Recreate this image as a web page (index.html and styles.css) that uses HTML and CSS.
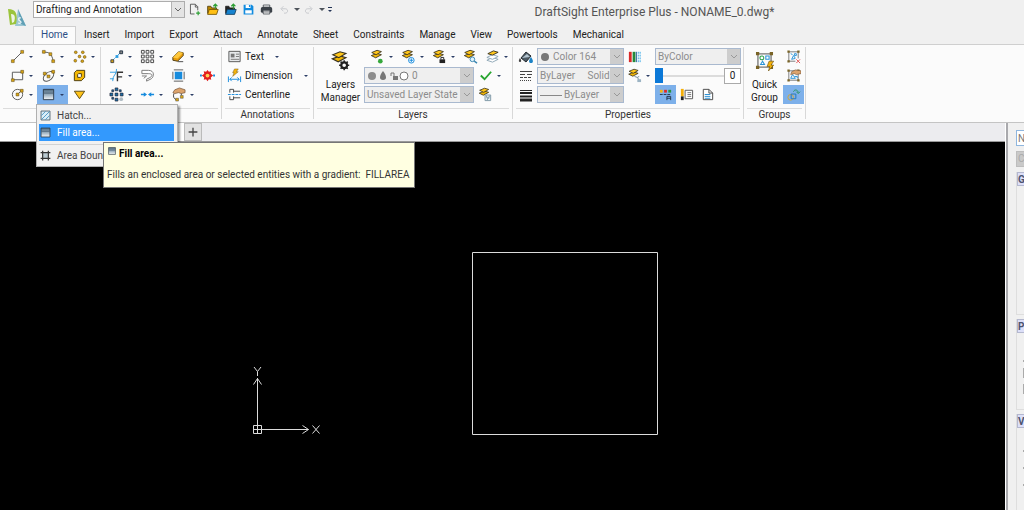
FILE: index.html
```html
<!DOCTYPE html>
<html lang="en">
<head>
<meta charset="utf-8">
<title>DraftSight Enterprise Plus - NONAME_0.dwg*</title>
<link rel="stylesheet" href="styles.css">
</head>
<body>
<svg class="defs" aria-hidden="true">
  <linearGradient id="fade" x1="0" y1="0" x2="0" y2="1"><stop offset="0" stop-color="#4f6a80"/><stop offset=".45" stop-color="#8fa6b7"/><stop offset="1" stop-color="#f4f7f9"/></linearGradient>
  <symbol id="layers" viewBox="0 0 16 16"><path d="M1.500 7.500 8 5l5 1.500-6.500 3.500z" fill="#f2b705" stroke="#3b3420"/><path d="M2 4 8 1.500l5 1.500-6 3.500z" fill="#ffc61a" stroke="#3b3420"/></symbol>
  <symbol id="gear" viewBox="0 0 16 16"><circle cx="8" cy="8" r="4" fill="none" stroke="#222" stroke-width="3"/><path d="M8 1v3M8 12v3M1 8h3M12 8h3M3 3l2 2M11 11l2 2M3 13l2-2M11 5l2-2" stroke="#222" stroke-width="2"/></symbol>
  <symbol id="fill" viewBox="0 0 16 16"><path d="M2.500 2.500h11v11h-11z" fill="url(#fade)" stroke="#2e3b47"/><path d="M3 6.500h10" stroke="#4a6075"/></symbol>
  <symbol id="frame" viewBox="0 0 16 16"><path d="M3 3h10v10H3z" fill="none" stroke="#777"/><path d="M1.500 1.500h2.500v2.500H1.500zM12 1.500h2.500v2.500H12zM1.500 12h2.500v2.500H1.500zM12 12h2.500v2.500H12z" fill="#7a6427"/></symbol>
</svg>
<div class="app">
  <header class="top">
    <svg class="logo" viewBox="0 0 18 19"><path d="M10 1 18 18H7z" fill="#9cc7d4"/><path d="M10 1 18 18l-5-2z" fill="#5f9fb5"/><path d="M0 1c8 0 10 5 8 15l-6 1z" fill="#9bc43c"/><path d="M3 6c5 0 4 5 3 8l-2 1z" fill="#eef3e4"/><path d="M13 10c-3-1-3 2-1 3s1 3-2 2" fill="none" stroke="#eef5f7" stroke-width="1.200"/></svg>
    <div class="top-rows">
      <div class="quick">
        <select class="workspace" aria-label="Workspace"><option>Drafting and Annotation</option></select>
        <button class="qb" aria-label="New"><svg viewBox="0 0 16 16"><path d="M3 1.500h6l3 3V9M8 13.500H3v-12M9 2v3h3" fill="none" stroke="#444"/><path d="M12.500 10v5M10 12.500h5" stroke="#2fa036" stroke-width="1.500"/></svg></button>
        <button class="qb" aria-label="Open"><svg viewBox="0 0 16 16"><path d="M2 13V4h4l1 2h6v2" fill="#b98500" stroke="#4d3c0c"/><path d="m2 14 2-6h11l-2 6z" fill="#ffbf13" stroke="#6b4f05"/><path d="M11.500 7V2M9 4l2.500-2.500L14 4" fill="none" stroke="#2fa036" stroke-width="1.500"/></svg></button>
        <button class="qb" aria-label="Open from server"><svg viewBox="0 0 16 16"><path d="M2 13V4h4l1 2h6v2" fill="#222" stroke="#222"/><path d="m2 14 2-6h11l-2 6z" fill="#1683d0" stroke="#153c5a"/><path d="M11.500 7V2M9 4l2.500-2.500L14 4" fill="none" stroke="#2fa036" stroke-width="1.500"/></svg></button>
        <button class="qb" aria-label="Save"><svg viewBox="0 0 16 16"><path d="M2 2h10l2 2v10H2z" fill="#118bdf"/><path d="M4.500 2h6v4h-6zM4 9h8v4H4z" fill="#fff"/><path d="M8.500 2.500H10V5H8.500z" fill="#118bdf"/></svg></button>
        <button class="qb" aria-label="Print"><svg viewBox="0 0 16 16"><rect x="1" y="5" width="14" height="7" rx="2" fill="#3b4148"/><path d="M4 2.500h8V5H4zM4 9h8v4.500H4z" fill="#fff" stroke="#3b4148"/><path d="M5 11h6" stroke="#3b4148"/></svg></button>
        <button class="qb" aria-label="Undo"><svg viewBox="0 0 16 16"><path d="M4 6h6c5 0 5 7 0 7H8M7 2 3 6l4 4" fill="none" stroke="#c5c8cc" stroke-width="1.500"/></svg></button>
        <button class="tri" aria-label="Undo list"></button>
        <button class="qb" aria-label="Redo"><svg viewBox="0 0 16 16"><path d="M12 6H6c-5 0-5 7 0 7h2M9 2l4 4-4 4" fill="none" stroke="#c5c8cc" stroke-width="1.500"/></svg></button>
        <button class="tri" aria-label="Redo list"></button>
        <button class="tri more" aria-label="Customize"></button>
        <h1>DraftSight Enterprise Plus - NONAME_0.dwg*</h1>
      </div>
      <nav class="tabs">
        <a class="on" href="#home">Home</a><a href="#insert">Insert</a><a href="#import">Import</a><a href="#export">Export</a><a href="#attach">Attach</a><a href="#annotate">Annotate</a><a href="#sheet">Sheet</a><a href="#constraints">Constraints</a><a href="#manage">Manage</a><a href="#view">View</a><a href="#powertools">Powertools</a><a href="#mechanical">Mechanical</a>
      </nav>
    </div>
  </header>

  <section class="ribbon">
    <div class="group draw">
      <div class="tools">
        <button class="tool drop" aria-label="Line"><svg viewBox="0 0 16 16"><path d="m3 13 10-10" stroke="#555"/><path d="M1.500 11.500h3v3h-3zM11.500 1.500h3v3h-3z" fill="#d9a514" stroke="#66501a" stroke-width=".6"/></svg></button>
        <button class="tool drop" aria-label="Arc"><svg viewBox="0 0 16 16"><path d="M3 4c5-2 9 2 10 9" fill="none" stroke="#555"/><g fill="#d9a514" stroke="#66501a" stroke-width=".6"><path d="M1.500 1.500h3v3h-3zM8.500 4h3v3h-3zM11.500 11.500h3v3h-3z"/></g></svg></button>
        <button class="tool drop" aria-label="Point"><svg viewBox="0 0 16 16"><g fill="#d9a514" stroke="#66501a" stroke-width=".6"><circle cx="4" cy="3.500" r="1.500"/><circle cx="11.500" cy="3.500" r="1.500"/><circle cx="8" cy="8" r="1.500"/><circle cx="13.500" cy="8.500" r="1.500"/><circle cx="3.500" cy="12.500" r="1.500"/><circle cx="11" cy="13" r="1.500"/></g></svg></button>
        <button class="tool drop" aria-label="Rectangle"><svg viewBox="0 0 16 16"><path d="M2.500 4.500h11v8h-11z" fill="none" stroke="#555"/><path d="M11.500 2.500h3v3h-3zM1.500 11.500h3v3h-3z" fill="#d9a514" stroke="#66501a" stroke-width=".6"/></svg></button>
        <button class="tool drop" aria-label="Ellipse"><svg viewBox="0 0 16 16"><ellipse cx="8" cy="9" rx="6.500" ry="4" transform="rotate(-40 8 9)" fill="none" stroke="#555"/><g fill="#d9a514" stroke="#66501a" stroke-width=".6"><path d="M6.500 7.500h3v3h-3zM11.500 2.500h3v3h-3zM2.500 4.500h3v3h-3z"/></g></svg></button>
        <button class="tool" aria-label="Region"><svg viewBox="0 0 16 16"><path d="M5 2.500h8.500V10L10 13.500H2.500V5z" fill="#f2b705" stroke="#463a12"/><path d="M7 6h3v3l-1 1H6V7z" fill="#fff" stroke="#463a12"/></svg></button>
        <button class="tool drop" aria-label="Circle"><svg viewBox="0 0 16 16"><circle cx="8" cy="8" r="5.500" fill="none" stroke="#555"/><path d="m8 8 4-4" stroke="#555"/><path d="M6.500 6.500h3v3h-3zM11 2.500h3v3h-3z" fill="#d9a514" stroke="#66501a" stroke-width=".6"/></svg></button>
        <div class="menu-host">
          <button class="tool drop on" aria-label="Hatch and fill"><svg><use href="#fill"/></svg></button>
          <div class="menu">
            <button><svg viewBox="0 0 16 16"><path d="M2.500 2.500h11v11h-11z" fill="#d9edf8" stroke="#405260"/><path d="m3 8 5-5M3 13 13 3M8 13l5-5" stroke="#3a8dbd"/></svg>Hatch...</button>
            <button class="hot"><svg><use href="#fill"/></svg>Fill area...</button>
            <hr>
            <button><svg viewBox="0 0 16 16"><path d="M5 5h6v6H5z" fill="#b8c8d0"/><path d="M4.500 2v12M11.500 2v12M2 4.500h12M2 11.500h12" stroke="#333" stroke-width="1.500"/></svg>Area Boun</button>
            <div class="tip" role="tooltip"><svg><use href="#fill"/></svg><strong>Fill area...</strong><p>Fills an enclosed area or selected entities with a gradient:&nbsp; FILLAREA</p></div>
          </div>
        </div>
        <button class="tool" aria-label="Wipeout"><svg viewBox="0 0 16 16"><path d="M2.500 4.500h11L8 12.500z" fill="#ffc31a" stroke="#594812"/></svg></button>
      </div>
      <h2></h2>
    </div>

    <div class="group modify">
      <div class="tools">
        <button class="tool drop" aria-label="Move"><svg viewBox="0 0 16 16"><path d="m4 12 8-8" stroke="#2b9be0" stroke-dasharray="3 1"/><path d="M2 11.500h3v3H2z" fill="#d9a514" stroke="#444"/><path d="M11.500 2h3v3h-3z" fill="#888" stroke="#234"/><path d="M7 6.500h3v3H7z" fill="#2b9be0"/></svg></button>
        <button class="tool drop" aria-label="Pattern"><svg viewBox="0 0 16 16"><path d="M1.500 1.500h3v3h-3zM6.500 1.500h3v3h-3zM11.500 1.500h3v3h-3zM1.500 6.500h3v3h-3zM6.500 6.500h3v3h-3zM11.500 6.500h3v3h-3zM1.500 11.500h3v3h-3zM6.500 11.500h3v3h-3zM11.500 11.500h3v3h-3z" fill="none" stroke="#444"/></svg></button>
        <button class="tool drop" aria-label="Delete"><svg viewBox="0 0 16 16"><path d="m2 9 6-6 5 1v3l-6 6-5-1z" fill="#e89c08" stroke="#4c3a12"/><path d="m2 9 6-6 5 1-6 6z" fill="#ffc83c"/><path d="M7 13.500h6" stroke="#444"/></svg></button>
        <span></span>
        <button class="tool drop" aria-label="Trim"><svg viewBox="0 0 16 16"><path d="M1 4.500h7M1 11.500h4M8 1c0 7-4 6-4 13" fill="none" stroke="#2b9be0"/><path d="M15 4.500H9V14M9 9.500h5" fill="none" stroke="#333" stroke-width="1.500"/></svg></button>
        <button class="tool" aria-label="Offset"><svg viewBox="0 0 16 16"><path d="M2 2.500h7c7 0 6 7 3 9l-5 2.500v-2l4-2c3-2 2-4-2-4H2zM2 8.500h5L4 11" fill="#fff" stroke="#777"/></svg></button>
        <button class="tool" aria-label="Stretch"><svg viewBox="0 0 16 16"><path d="M4 4h8v8H4z" fill="#168bdd"/><path d="M3 2h10M3 14h10M2 4v8M14 4v8" stroke="#555"/></svg></button>
        <button class="tool" aria-label="Explode"><svg viewBox="0 0 16 16"><path d="M0 8h2M14 8h2" stroke="#168bdd" stroke-width="2"/><path d="m8 2 1.500 2 2.500-.5-.5 2.500L14 8l-2.500 2 .5 2.500-2.500-.5L8 14l-1.500-2-2.500.5.500-2.500L2 8l2.500-2L4 3.500l2.500.5z" fill="#e21e1e"/><circle cx="8" cy="8" r="2" fill="#ffcf55"/></svg></button>
        <button class="tool drop" aria-label="Array"><svg viewBox="0 0 16 16"><g fill="#1b6fa8" stroke="#223" stroke-width=".7"><path d="M6.500 1h3v3h-3zM6.500 6.500h3v3h-3zM1 6.500h3v3H1zM12 6.500h3v3h-3zM6.500 12h3v3h-3zM3 3h2v2H3zM11 3h2v2h-2zM3 11h2v2H3z"/></g><circle cx="13" cy="13" r="2" fill="#aebac2"/></svg></button>
        <button class="tool drop" aria-label="Weld"><svg viewBox="0 0 16 16"><path d="M1 8h5M10 8h5" stroke="#168bdd" stroke-width="1.500"/><path d="m4 5.500 3.500 2.500L4 10.500zM12 5.500 8.500 8l3.500 2.500z" fill="#168bdd"/></svg></button>
        <button class="tool drop" aria-label="Edit polyline"><svg viewBox="0 0 16 16"><path d="m4 3 5-2 6 2v3l-4 1-3-1-4 1-2-1z" fill="#dca36c" stroke="#6b4d32" stroke-width=".7"/><path d="M3 7c-1 4 0 5 3 7M11 7v2" fill="none" stroke="#444"/><path d="M10 9h3v3h-3zM5 12h3v3H5z" fill="#d9a514" stroke="#444" stroke-width=".5"/></svg></button>
      </div>
      <h2></h2>
    </div>

    <div class="group notes">
      <div class="rows">
        <button class="wide"><svg viewBox="0 0 16 16"><path d="M2 2.500h12v11H2z" fill="#e7e9eb" stroke="#555"/><path d="M4 5h4v4H4z" fill="#777"/><path d="M9.500 5.500H13M9.500 8H13M4 11h9" stroke="#777"/></svg>Text<i class="arrow"></i></button>
        <button class="wide"><svg viewBox="0 0 16 16"><path d="M8 1h4l-2 3h2L6 9l1.500-4H6z" fill="#f5b30a" stroke="#74581a" stroke-width=".5"/><path d="M1.500 9v6M14.500 9v6M3 12h10M5 10l-2 2 2 2M11 10l2 2-2 2" fill="none" stroke="#168bdd"/></svg>Dimension<i class="arrow"></i></button>
        <button class="wide"><svg viewBox="0 0 16 16"><path d="M1 8h14" stroke="#168bdd" stroke-dasharray="3 1"/><path d="M3 6V2.500h4V6M7 4.500h7M3 10v3.500h4V10M7 11.500h7" fill="none" stroke="#444"/></svg>Centerline</button>
      </div>
      <h2>Annotations</h2>
    </div>

    <div class="group layer">
      <div class="split">
        <button class="big"><svg viewBox="0 0 20 20"><use href="#layers" width="19" height="18"/><use href="#gear" x="8" y="9" width="11" height="11"/></svg><span>Layers Manager</span></button>
        <div class="rows">
          <div class="row">
            <button class="tool drop" aria-label="Activate layer"><svg viewBox="0 0 16 16"><use href="#layers" width="15" height="15"/><circle cx="11" cy="13" r="2.500" fill="#35a83b"/></svg></button>
            <button class="tool drop" aria-label="New layer"><svg viewBox="0 0 16 16"><use href="#layers" width="15" height="15"/><circle cx="11" cy="12" r="3" fill="#fff" stroke="#168bdd"/><path d="M11 10v4M9 12h4" stroke="#168bdd"/></svg></button>
            <button class="tool drop" aria-label="Lock layer"><svg viewBox="0 0 16 16"><use href="#layers" width="15" height="15"/><path d="M8 11h6v4H8z" fill="#222"/><path d="M9.500 11V9h3v2" fill="none" stroke="#222"/></svg></button>
            <button class="tool" aria-label="Layer preview"><svg viewBox="0 0 16 16"><use href="#layers" width="15" height="15"/><circle cx="10" cy="11" r="2.500" fill="#dff2fc" stroke="#3985b0"/><path d="m12 13 3 2" stroke="#3985b0" stroke-width="1.500"/></svg></button>
            <button class="tool drop" aria-label="Layer tools"><svg viewBox="0 0 16 16"><path d="m2 12 6-3 6 2-6 3z" fill="#fff" stroke="#8ea6b5"/><path d="m2 9 6-3 6 2-6 3z" fill="#fff" stroke="#8ea6b5"/><path d="m3 5 6-3 5 1.500-6 3z" fill="#ffc61a" stroke="#3b3420"/></svg></button>
          </div>
          <div class="row">
            <span class="pick"><select class="combo icons4" aria-label="Active layer"><option>0</option></select><svg class="over" viewBox="0 0 42 12"><circle cx="5" cy="6" r="4" fill="#8c8c8c"/><path d="M16 1c4 5 4 9 0 9s-4-4 0-9z" fill="#777"/><path d="M24 6V3h3v3" fill="none" stroke="#777"/><path d="M26 6h5v4h-5z" fill="#777"/><circle cx="37" cy="6" r="4" fill="#fff" stroke="#777"/></svg></span>
            <button class="tool drop" aria-label="Apply"><svg viewBox="0 0 16 16"><path d="m3 8 4 4 7-8" fill="none" stroke="#27a52f" stroke-width="2"/></svg></button>
          </div>
          <div class="row">
            <span class="pick"><select class="combo" aria-label="Layer state"><option>Unsaved Layer State</option></select></span>
            <button class="tool" aria-label="Layer states manager"><svg viewBox="0 0 16 16"><use href="#layers" width="14" height="14"/><path d="M7.500 8.500h6v6h-6z" fill="#e9f1f5" stroke="#7e98a5"/><path d="M9 9v2h3V9M10 14v-2h2" fill="none" stroke="#7e98a5"/></svg></button>
          </div>
        </div>
      </div>
      <h2>Layers</h2>
    </div>

    <div class="group props">
      <div class="split">
        <div class="rows">
          <div class="row">
            <svg class="mark" viewBox="0 0 16 16"><path d="m3 9 5-6 5 4-5 6z" fill="#4d5a64" stroke="#252b30"/><path d="m4 9 5-4 3 3z" fill="#b3c4cf"/><path d="M13 8c3 4 2 6 0 6s-3-2 0-6z" fill="#1c83c6"/><path d="M2 9c2 3 1 4 0 4s-2-1 0-4z" fill="#444"/></svg>
            <span class="pick"><select class="combo icons1" aria-label="Line color"><option>Color 164</option></select><svg class="over" viewBox="0 0 42 12"><circle cx="5" cy="6" r="4" fill="#777"/></svg></span>
            <button class="tool" aria-label="Colors"><svg viewBox="0 0 16 16"><path d="M2 3h3v11H2z" fill="#d92929"/><path d="M6 3h3v11H6z" fill="#26883a"/><path d="M10 3v11" stroke="#225b94"/><path d="M12 3v11M14 3v11" stroke="#33a6e5" stroke-dasharray="2 1"/></svg></button>
          </div>
          <div class="row">
            <svg class="mark" viewBox="0 0 16 16"><g stroke="#444"><path d="M2 3.500h12"/><path d="M2 6.500h12" stroke-dasharray="5 2"/><path d="M2 9.500h12" stroke-dasharray="3 1"/><path d="M2 12.500h12" stroke-dasharray="1 1"/></g></svg>
            <span class="pick"><select class="combo" aria-label="Line style"><option>ByLayer&nbsp;&nbsp;&nbsp;&nbsp; Solid</option></select></span>
            <button class="tool drop" aria-label="Property painter"><svg viewBox="0 0 16 16"><use href="#layers" width="15" height="14"/><path d="m8 9 3 1 2 3M11 10l2-1" stroke="#738b9a" fill="none"/><path d="M11 12h4v3h-4z" fill="#9cb4c4"/></svg></button>
          </div>
          <div class="row">
            <svg class="mark" viewBox="0 0 16 16"><path d="M2 3.500h12" stroke="#222"/><path d="M2 6h12" stroke="#222" stroke-width="2"/><path d="M2 9.500h12" stroke="#222" stroke-width="2"/><path d="M2 13h12" stroke="#222" stroke-width="3"/></svg>
            <span class="pick"><select class="combo icons2" aria-label="Line weight"><option>ByLayer</option></select><svg class="over" viewBox="0 0 42 12"><path d="M0 6.500h22" stroke="#888"/></svg></span>
          </div>
        </div>
        <div class="rows right">
          <div class="row"><span class="pick"><select class="combo" aria-label="Print style"><option>ByColor</option></select></span></div>
          <div class="row"><input class="slide" type="range" min="0" max="90" value="0" aria-label="Transparency"><input class="num" type="text" value="0" aria-label="Transparency value"></div>
          <div class="row">
            <button class="sq on" aria-label="Annotative"><svg viewBox="0 0 16 16"><path d="M2 3h3v3H2z" fill="#f3b412"/><path d="M6.500 3h3v3h-3z" fill="#e22929"/><path d="M11 3h3v3h-3z" fill="#29933d"/><path d="M2 8h12" stroke="#23364a" stroke-dasharray="3 1"/><path d="M9.500 14v-4h4v4M9.500 12h4" fill="none" stroke="#23364a"/></svg></button>
            <button class="sq" aria-label="Property palette"><svg viewBox="0 0 16 16"><path d="M6.500 3.500h8v9h-8z" fill="#fff" stroke="#555"/><path d="M9 6h4M9 8h4M9 10h4" stroke="#777"/><path d="M2 2h3v8H2z" fill="#f4ae08"/><path d="M2 10h3v4H2z" fill="#222"/></svg></button>
            <button class="sq" aria-label="Document properties"><svg viewBox="0 0 16 16"><path d="M3.500 2.500h6l4 4v7h-10zM9.500 2.500v4h4" fill="#fff" stroke="#444"/><path d="M5 8h6M5 10h6M5 12h6" stroke="#238bd0"/></svg></button>
          </div>
        </div>
      </div>
      <h2>Properties</h2>
    </div>

    <div class="group sets">
      <div class="split">
        <button class="big"><svg viewBox="0 0 16 16"><use href="#frame"/><circle cx="6" cy="6" r="1.500" fill="#fff" stroke="#2a9e4b" stroke-width=".8"/><path d="M9 4.500h2.500V7H9zM5 11l1.500-2.500L8 11z" fill="#fff" stroke="#2792d8" stroke-width=".8"/><path d="M11.500 8.500H15l-2 3h2l-4 4.500 1-3.500h-2z" fill="#f4b10a" stroke="#6b5212" stroke-width=".5"/></svg><span>Quick Group</span></button>
        <div class="rows">
          <button class="sq" aria-label="Ungroup"><svg viewBox="0 0 16 16"><use href="#frame"/><path d="m6 11 2-4 2 3zM9 5h2v2H9zM5 5l2 1" fill="none" stroke="#2792d8"/><path d="M10 10h6v6h-6z" fill="#fbfbfb"/><path d="m11 11 4 4M15 11l-4 4" stroke="#e05252"/></svg></button>
          <button class="sq" aria-label="Edit group"><svg viewBox="0 0 16 16"><use href="#frame"/><path d="m5 11 2-4 3 4zM9 9h3v2" fill="none" stroke="#2792d8"/><path d="m6 4 4-2 6 1v3l-5 1-2-1-4 1z" fill="#dca36c" stroke="#6b4d32" stroke-width=".6"/></svg></button>
          <button class="sq on" aria-label="Group selection"><svg viewBox="0 0 16 16"><circle cx="5" cy="11" r="3" fill="none" stroke="#d6a52f"/><path d="M5.500 7.500h5v5h-5z" fill="none" stroke="#2679b8"/><path d="M8 5c1-3 5-2 5 1M11 5l2 2 2-2" fill="none" stroke="#28945a"/></svg></button>
        </div>
      </div>
      <h2>Groups</h2>
    </div>
  </section>

  <main class="work">
    <div class="doc">
      <div class="strip"><button class="doc-tab" aria-label="NONAME_0.dwg"></button><button class="add" aria-label="New drawing"><svg viewBox="0 0 16 16"><path d="M8 3v10M3 8h10" stroke="#444" stroke-width="1.500"/></svg></button></div>
      <svg class="canvas" fill="none" stroke="#dcdcdc" aria-label="Drawing area">
        <path d="M472.500 110.500h185v182h-185z"/>
        <path d="M257.500 291V236M253.500 242.500l4-6 4 6M254 225l3.500 4.500L261 225M257.500 229.500V234M253.500 283.500h8v8h-8zM253.500 287.500h55M302.500 283.500l6 4-6 4M312.500 283.500l7 8M319.500 283.500l-7 8"/>
      </svg>
    </div>
    <aside class="side">
      <input type="text" value="N" aria-label="Selection">
      <button class="gray" aria-label="Filter">C</button>
      <section class="s1"><h3>G</h3></section>
      <section class="s2"><h3>P</h3><ul><li></li><li></li><li></li></ul></section>
      <section class="s3"><h3>V</h3><ol><li></li><li></li><li></li></ol></section>
    </aside>
  </main>
</div>
</body>
</html>
```

FILE: styles.css
```css
* { box-sizing: border-box; }
body { margin: 0; font: 10px/12px Roboto, "Open Sans", sans-serif; color: #222; background: #f0f0f0; }
button, input, select { font: inherit; color: inherit; margin: 0; padding: 0; border: 0; background: none; border-radius: 0; }
h1, h2, h3, p, ul, ol { margin: 0; padding: 0; font-weight: normal; }
ul, ol { list-style: none; }
svg { display: block; flex: none; width: 16px; height: 16px; }
.defs { position: absolute; width: 0; height: 0; }
.app { display: flex; flex-direction: column; height: 100vh; overflow: hidden; }

.top { display: flex; border-bottom: 1px solid #cfcfcf; }
.logo { width: 18px; height: 19px; margin: 8px 7px 0 8px; }
.top-rows { flex: 1; }
.quick { display: flex; align-items: center; height: 19px; }
.workspace { width: 152px; height: 17px; padding-left: 2px; appearance: none; border: 1px solid #adadad;
  background: #fff url("data:image/svg+xml,%3Csvg xmlns='http://www.w3.org/2000/svg' width='13' height='15'%3E%3Cpath d='M0 0h13v15H0z' fill='%23e4e4e4'/%3E%3Cpath d='M.5 0v15' stroke='%23b4b4b4'/%3E%3Cpath d='m4 6 3 3 3-3' fill='none' stroke='%23666'/%3E%3C/svg%3E") right center no-repeat; }
.qb { width: 18px; height: 18px; display: grid; place-items: center; }
.qb svg { width: 13px; height: 13px; }
.qb:nth-of-type(n+6) svg { width: 10px; height: 10px; }
.tri { width: 7px; display: grid; place-items: center; }
.tri::before { content: ""; border: 3px solid transparent; border-top-color: #4d535a; border-bottom: 0; }
.tri.more { margin-left: 1px; row-gap: 1px; grid-template-rows: 1px 3px; }
.tri.more::before { content: ""; width: 4px; height: 1px; border: 0; background: #235; grid-row: 1; }
.tri.more::after { content: ""; border: 2px solid transparent; border-top: 2px solid #235; border-bottom: 0; }
.quick h1 { flex: 1; align-self: flex-end; text-align: center; padding-right: 48px; font-size: 12px; line-height: 13px; color: #555; }
.tabs { display: flex; align-items: flex-end; margin-top: 7px; }
.tabs a { padding: 3px 7px 2px 8px; height: 18px; color: #222; text-decoration: none; }
.tabs .on { color: #2c4f85; background: #fbfbfb; border: 1px solid #cfcfcf; border-bottom: 0; padding: 2px 7px; }

.ribbon { display: flex; height: 78px; background: #fbfbfb; border-bottom: 1px solid #c4c4c4; padding: 2px 0 3px; }
.group { display: flex; flex-direction: column; border-right: 1px solid #d8d8d8; flex: none; }
.group h2 { flex: 1; border-top: 1px solid #dcdcdc; text-align: center; margin: 4px 3px 0; font-size: 10px; line-height: 11px; color: #333; }
.draw { width: 101px; }
.modify { width: 121px; }
.notes { width: 92px; }
.layer { width: 199px; }
.props { width: 231px; }
.sets { width: 62px; }
.tools { display: grid; grid-template-columns: repeat(3, 31px) 20px; grid-auto-rows: 19px; }
.draw .tools { grid-template-columns: repeat(3, 31px); padding-left: 6px; }
.modify .tools { padding-left: 4px; }
.tool { display: flex; align-items: center; gap: 4px; height: 19px; padding-left: 4px; }
.tool svg { width: 15px; height: 15px; }
.drop { width: 31px; }
.modify .tool:nth-child(8) { padding-left: 2px; }
.drop::after, .arrow { content: ""; border: 2px solid transparent; border-top: 2px solid #2c3e66; border-bottom: 0; }
.on { background: #7db0ea; }
.rows { display: flex; flex-direction: column; }
.row { display: flex; align-items: center; height: 19px; }
.split { display: flex; height: 57px; }
.wide { display: flex; align-items: center; height: 19px; padding: 0 5px; gap: 3px; white-space: nowrap; }
.wide svg { width: 15px; height: 15px; }
.notes .wide:first-child .arrow { margin-left: 8px; }
.notes .wide:nth-child(2) .arrow { margin-left: auto; }
.big { display: flex; flex-direction: column; align-items: center; justify-content: space-between; width: 50px; padding: 3px 1px 0 4px; line-height: 13px; }
.big svg { width: 21px; height: 21px; }
.pick { position: relative; display: block; width: 110px; }
.combo { display: block; width: 100%; height: 17px; padding-left: 2px; appearance: none; color: #8c8c8c; border: 1px solid #a9b9cf;
  background: #efefef url("data:image/svg+xml,%3Csvg xmlns='http://www.w3.org/2000/svg' width='13' height='15'%3E%3Cpath d='M0 0h13v15H0z' fill='%23cdcdcd'/%3E%3Cpath d='m4 6 3 3 3-3' fill='none' stroke='%23999'/%3E%3C/svg%3E") right center no-repeat; }
.icons4 { padding-left: 47px; }
.icons1 { padding-left: 15px; }
.icons2 { padding-left: 26px; }
.over { position: absolute; left: 3px; top: 3px; width: 42px; height: 12px; pointer-events: none; }
.layer .rows { flex: 1; }
.layer .row:first-child { padding-left: 2px; }
.layer .row:first-child .tool:last-child { margin-left: auto; }
.mark { margin: 0 3px 0 5px; }
.props .pick { width: 87px; }
.props .pick + .tool { padding-left: 3px; }
.right { width: 86px; }
.props .right .pick { width: 86px; }
.props .split > .rows:first-child { width: 142px; }
.slide { appearance: none; width: 69px; height: 15px; background: linear-gradient(#dcdcdc, #dcdcdc) center / 100% 2px no-repeat; }
.slide::-webkit-slider-thumb { appearance: none; width: 8px; height: 15px; background: #0b78d7; }
.num { width: 17px; height: 16px; border: 1px solid #aaa; background: #fff; text-align: center; }
.sq { width: 21px; height: 19px; display: grid; place-items: center; }
.sq svg { width: 15px; height: 15px; }
.sets .big { width: 39px; padding-left: 2px; padding-right: 0; }

.menu-host { position: relative; }
.menu { position: absolute; z-index: 2; left: -1px; top: 19px; width: 142px; padding: 2px 3px 2px 2px; background: #f1f1f1; border: 1px solid #b0b0b0; box-shadow: 2px 2px 2px #0006; }
.menu button { display: flex; align-items: center; gap: 5px; width: 100%; height: 17px; white-space: nowrap; color: #444; }
.menu svg { width: 13px; height: 13px; }
.menu .hot { background: #3399fd; color: #fff; }
.menu hr { border: 0; border-top: 1px solid #d2d2d2; margin: 3px 0 2px; }
.tip { position: absolute; left: 66px; top: 37px; width: 312px; height: 46px; padding: 3px; display: grid; grid-template-columns: 10px auto; align-content: space-between; gap: 0 2px; background: #ffffe1; border: 1px solid #767676; color: #333; white-space: nowrap; }
.menu .tip svg { width: 10px; height: 10px; }
.tip strong { padding-top: 2px; color: #000; }
.tip p { grid-column: 1 / 3; padding-bottom: 3px; }

.work { flex: 1; display: flex; min-height: 0; }
.doc { flex: 1; display: flex; flex-direction: column; min-width: 0; background: #000; border-right: 1px solid #fff; }
.strip { display: flex; height: 19px; background: #ececef; border-bottom: 1px solid #999; }
.doc-tab { width: 184px; background: #fff; }
.add { width: 18px; background: #e2e2e2; border: 1px solid #bbb; display: grid; place-items: center; }
.add svg { width: 14px; height: 14px; }
.canvas { flex: 1; width: 100%; min-height: 0; }
.side { width: 18px; flex: none; overflow: hidden; padding: 7px 0 0 8px; border-left: 2px solid #a9a9ad; background: #f0f0f0; color: #777; }
.side input { display: block; width: 20px; height: 16px; padding-left: 1px; border: 1px solid #8fb6de; background: #fff; }
.side .gray { display: block; width: 20px; height: 16px; margin: 5px 0; padding-left: 1px; text-align: left; background: #c9c9c9; border: 1px solid #bdbdbd; color: #aaa; }
.side section { width: 20px; margin-bottom: 4px; border: 1px solid #dedede; border-top: 0; }
.side h3 { height: 14px; font-size: 10px; line-height: 13px; font-weight: bold; color: #4d5470; background: #dcdff8; border: 1px solid #b4b8cf; }
.s1 { height: 143px; }
.s2 { height: 91px; }
.s3 { height: 120px; }
.side li { width: 4px; height: 10px; margin: 0 0 6px 6px; background: #aaa; }
.side ul { padding-top: 27px; }
.side li:first-child { height: 2px; }
.side ol { padding-top: 22px; }
.side ol li { height: 2px; margin-bottom: 15px; }
```
